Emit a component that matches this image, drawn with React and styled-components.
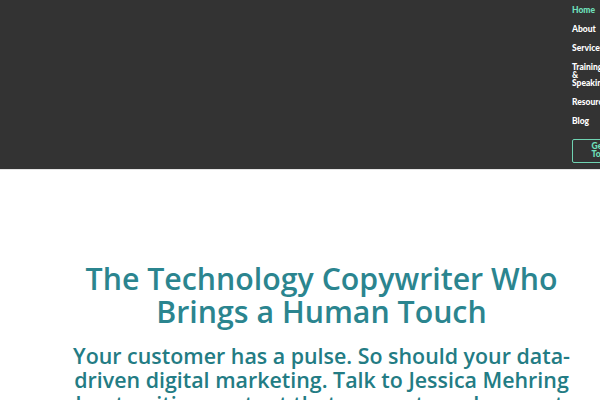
import React from "react";
import styled, { createGlobalStyle } from "styled-components";

const Global = createGlobalStyle`
  html, body { margin: 0; padding: 0; background: #fff; overflow: hidden; }
  body { font-family: "Open Sans", sans-serif; }
`;

const Page = styled.div`
  width: 600px;
  height: 400px;
  overflow: hidden;
`;

const Header = styled.header`
  height: 169px;
  background: #333333;
  border-bottom: 1px solid #e4e4e4;
  display: flex;
`;

const Spacer = styled.div`
  flex: 1;
`;

const Nav = styled.nav`
  width: 34px;
  flex: 0 0 34px;
  margin-right: -6px;
  padding-top: 6px;
  display: flex;
  flex-direction: column;
  gap: 11px;
`;

const NavItem = styled.a`
  font-family: "Lato", sans-serif;
  font-weight: 900;
  font-size: 8.5px;
  line-height: 8px;
  color: ${(p) => (p.$active ? "#6fe0bb" : "#ffffff")};
  text-decoration: none;
`;

const CTA = styled.a`
  margin-top: 3px;
  width: 62px;
  flex: 0 0 auto;
  box-sizing: border-box;
  height: 24px;
  border: 1.5px solid #6fd3b2;
  border-radius: 2px;
  display: flex;
  align-items: center;
  justify-content: center;
  text-align: center;
  font-family: "Lato", sans-serif;
  font-weight: 900;
  font-size: 8.5px;
  line-height: 7.6px;
  color: #6fe0bb;
  padding: 0 14px;
`;

const Hero = styled.main`
  width: 643px;
  padding-top: 92px;
  display: flex;
  flex-direction: column;
  align-items: center;
  text-align: center;
`;

const Title = styled.h1`
  margin: 0;
  font-family: "Open Sans", sans-serif;
  font-weight: 600;
  font-size: 30.3px;
  line-height: 33px;
  color: #2b858f;
  width: 540px;
`;

const Lead = styled.p`
  margin: 16px 0 0;
  font-family: "Open Sans", sans-serif;
  font-weight: 600;
  font-size: 21.4px;
  line-height: 24px;
  color: #237c84;
  width: 540px;
`;

export default function App() {
  const items = ["Home", "About", "Services", "Training & Speaking", "Resources", "Blog"];
  return (
    <Page>
      <Global />
      <Header>
        <Spacer />
        <Nav>
          {items.map((t, i) => (
            <NavItem key={t} $active={i === 0}>{t}</NavItem>
          ))}
          <CTA>Get in Touch</CTA>
        </Nav>
      </Header>
      <Hero>
        <Title>The Technology Copywriter Who Brings a Human Touch</Title>
        <Lead>
          Your customer has a pulse. So should your data-driven digital marketing. Talk to Jessica Mehring about writing content that connects and converts.
        </Lead>
      </Hero>
    </Page>
  );
}
